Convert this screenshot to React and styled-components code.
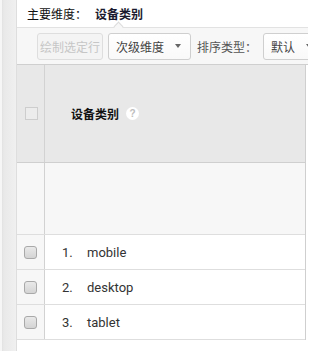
import React from "react";
import styled, { createGlobalStyle } from "styled-components";

const GlobalStyle = createGlobalStyle`
  html, body {
    margin: 0;
    padding: 0;
    background: #fff;
    overflow: hidden;
  }
  body {
    font-family: "Noto Sans CJK SC", "Liberation Sans", sans-serif;
    font-size: 12px;
    color: #222;
  }
`;

const Page = styled.div`
  display: flex;
  width: 308px;
  height: 351px;
`;

const LeftRail = styled.div`
  flex: 0 0 16px;
  background: linear-gradient(to right, #f6f6f6 0, #f6f6f6 2px, #e2e2e2 2px, #e9e9e9 4px, #f0f0f0 16px);
  border-right: 1px solid #dedede;
`;

const Main = styled.div`
  flex: 1;
  min-width: 0;
  display: flex;
  flex-direction: column;
  overflow: hidden;
`;

const TitleBar = styled.div`
  position: relative;
  height: 27px;
  display: flex;
  align-items: center;
  padding-left: 10px;
  border-bottom: 1px solid #e2e2e2;
  background: #fff;
`;

const TitleLabel = styled.span`
  color: #111;
`;

const TitleValue = styled.span`
  position: relative;
  margin-left: 8px;
  font-weight: bold;
  color: #1a1a2e;
`;

const Notch = styled.span`
  position: absolute;
  left: 20px;
  bottom: -8px;
  width: 6px;
  height: 6px;
  background: #f7f7f7;
  border-top: 1px solid #dcdcdc;
  border-left: 1px solid #dcdcdc;
  transform: rotate(45deg);
`;

const Toolbar = styled.div`
  height: 36px;
  display: flex;
  align-items: center;
  gap: 5px;
  padding-left: 20px;
  background: #f7f7f7;
  border-bottom: 1px solid #cfcfcf;
  white-space: nowrap;
`;

const Button = styled.div`
  flex: none;
  height: 25px;
  display: flex;
  align-items: center;
  gap: 11px;
  padding: 0 ${(p) => (p.$menu ? "9px" : "2px")} 0 ${(p) => (p.$menu ? "7px" : "2px")};
  border: 1px solid ${(p) => (p.$disabled ? "#dedede" : "#cfcfcf")};
  border-radius: 3px;
  background: ${(p) => (p.$disabled ? "#f4f4f4" : "linear-gradient(#fff, #f9f9f9)")};
  color: ${(p) => (p.$disabled ? "#c6c6c6" : "#444")};
  font-size: 12px;
`;

const Caret = styled.span`
  width: 0;
  height: 0;
  border-left: 3.5px solid transparent;
  border-right: 3.5px solid transparent;
  border-top: 4px solid #666;
`;

const ToolLabel = styled.span`
  flex: none;
  margin: 0 1px 0 1px;
  color: #555;
`;

const Table = styled.div`
  width: 288px;
  border-right: 1px solid #cfcfcf;
`;

const Row = styled.div`
  display: flex;
  height: ${(p) => p.$h}px;
  background: ${(p) => p.$bg || "#fff"};
  border-bottom: 1px solid ${(p) => p.$line || "#dedede"};
  box-sizing: border-box;
`;

const CheckCell = styled.div`
  flex: 0 0 28px;
  display: flex;
  align-items: center;
  padding-left: ${(p) => (p.$head ? 8 : 7)}px;
  box-sizing: border-box;
  border-right: 1px solid #d2d2d2;
  background: ${(p) => p.$bg || "#f7f7f7"};
`;

const HeadBox = styled.span`
  width: 11px;
  height: 11px;
  border: 1px solid #cdcdcd;
  background: #ececec;
`;

const RowBox = styled.span`
  width: 11px;
  height: 11px;
  border: 1px solid #a9a9a9;
  border-radius: 3px;
  background: linear-gradient(#e9e9e9, #d4d4d4);
`;

const HeadCell = styled.div`
  flex: 1;
  display: flex;
  align-items: center;
  padding-left: 26px;
  font-weight: bold;
  color: #111;
`;

const Help = styled.span`
  margin-left: 7px;
  width: 13px;
  height: 13px;
  border-radius: 50%;
  background: #fff;
  color: #bdbdbd;
  font-family: "Liberation Sans", sans-serif;
  font-size: 10px;
  font-weight: bold;
  display: flex;
  align-items: center;
  justify-content: center;
`;

const DataCell = styled.div`
  flex: 1;
  display: flex;
  align-items: center;
  padding-left: 17px;
  font-family: Roboto, "Liberation Sans", sans-serif;
  font-size: 13px;
  color: #333;
`;

const Num = styled.span`
  width: 25px;
`;

const rows = ["mobile", "desktop", "tablet"];

export default function App() {
  return (
    <>
      <GlobalStyle />
      <Page>
        <LeftRail />
        <Main>
          <TitleBar>
            <TitleLabel>主要维度：</TitleLabel>
            <TitleValue>
              设备类别
              <Notch />
            </TitleValue>
          </TitleBar>
          <Toolbar>
            <Button $disabled>绘制选定行</Button>
            <Button $menu>
              次级维度
              <Caret />
            </Button>
            <ToolLabel>排序类型：</ToolLabel>
            <Button $menu>
              默认
              <Caret />
            </Button>
          </Toolbar>
          <Table>
            <Row $h={98} $bg="#e8e8e8" $line="#cfcfcf">
              <CheckCell $head $bg="#e8e8e8">
                <HeadBox />
              </CheckCell>
              <HeadCell>
                设备类别
                <Help>?</Help>
              </HeadCell>
            </Row>
            <Row $h={72} $bg="#f7f7f7">
              <CheckCell />
            </Row>
            {rows.map((name, i) => (
              <Row key={name} $h={35}>
                <CheckCell>
                  <RowBox />
                </CheckCell>
                <DataCell>
                  <Num>{i + 1}.</Num>
                  {name}
                </DataCell>
              </Row>
            ))}
          </Table>
        </Main>
      </Page>
    </>
  );
}
